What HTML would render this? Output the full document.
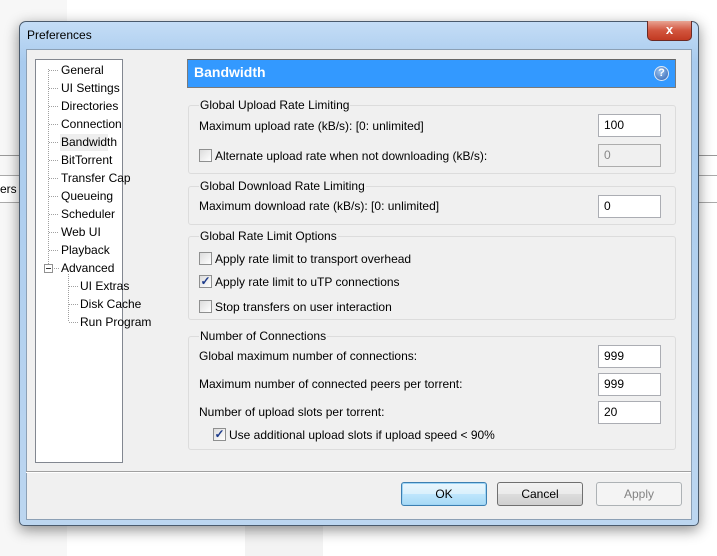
<!DOCTYPE html>
<html><head><style>
*{box-sizing:border-box}
body{margin:0;width:717px;height:556px;background:#fff;font-family:"Liberation Sans",sans-serif;font-size:12px;color:#000;position:relative;overflow:hidden}
.a{position:absolute}
.win{left:19px;top:21px;width:680px;height:505px;border:1px solid #4a5a6c;border-radius:7px 7px 5px 5px;background:linear-gradient(#c4ddf6,#a9cbee 40px,#bcd6f0);box-shadow:0 4px 14px rgba(0,0,0,.45)}
.client{left:6px;top:27px;width:666px;height:471px;background:#f0f0f0;border:1px solid #8ca0b5}
.tree{left:35px;top:59px;width:88px;height:404px;background:#fff;border:1px solid #828790}
.ti{position:absolute;white-space:nowrap}
.grp{position:absolute;left:188px;width:488px;border:1px solid #dcdcdc;border-radius:3px}
.gt{position:absolute;left:10px;top:-8px;background:#f0f0f0;padding:0 1px;white-space:nowrap}
.lbl{position:absolute;left:199px;white-space:nowrap}
.inp{position:absolute;left:598px;width:63px;height:23px;background:#fff;border:1px solid #abadb3;padding:3px 5px}
.cb{position:absolute;width:13px;height:13px;border:1px solid #8e8f8f;background:linear-gradient(135deg,#dcdcdc,#fff)}
.btn{position:absolute;top:482px;width:86px;height:24px;border:1px solid #707070;border-radius:3px;background:linear-gradient(#f2f2f2,#ebebeb 50%,#dddddd 50%,#cfcfcf);text-align:center;line-height:22px}
</style></head><body>
<div class="a" style="left:0;top:0;width:67px;height:556px;background:#f7f7f7"></div>
<div class="a" style="left:0;top:155px;width:30px;height:1px;background:#999"></div>
<div class="a" style="left:0;top:175px;width:30px;height:28px;border-top:1px solid #aaa;border-bottom:1px solid #aaa;background:#fff;font-size:12px;line-height:26px">ers</div>
<div class="a" style="left:245px;top:526px;width:78px;height:30px;background:#f3f3f3"></div>
<div class="a" style="left:698px;top:155px;width:19px;height:1px;background:#999"></div>
<div class="a" style="left:698px;top:175px;width:19px;height:28px;border-top:1px solid #aaa;border-bottom:1px solid #aaa"></div>

<div class="a win">
 <div class="a" style="left:7px;top:6px;font-size:12px">Preferences</div>
 <div class="a" style="left:627px;top:-1px;width:45px;height:20px;border:1px solid #6b2a24;border-top:none;border-radius:0 0 5px 5px;background:linear-gradient(#e8a493,#d2553e 50%,#c23a22);color:#fff;text-align:center;font-weight:bold;font-size:13px;line-height:18px">x</div>
 <div class="a client"></div>
</div>

<div class="a tree">
 <svg class="a" style="left:0;top:0" width="88" height="404">
  <g stroke="#a0a0a0" stroke-dasharray="1 1">
   <line x1="12.5" y1="9" x2="12.5" y2="204"/>
   <line x1="32.5" y1="214" x2="32.5" y2="262"/>
  </g>
  <g stroke="#a0a0a0" stroke-dasharray="1 1">
   <line x1="13" y1="10.5" x2="23" y2="10.5"/><line x1="13" y1="28.5" x2="23" y2="28.5"/><line x1="13" y1="46.5" x2="23" y2="46.5"/><line x1="13" y1="64.5" x2="23" y2="64.5"/><line x1="13" y1="82.5" x2="23" y2="82.5"/><line x1="13" y1="100.5" x2="23" y2="100.5"/><line x1="13" y1="118.5" x2="23" y2="118.5"/><line x1="13" y1="136.5" x2="23" y2="136.5"/><line x1="13" y1="154.5" x2="23" y2="154.5"/><line x1="13" y1="172.5" x2="23" y2="172.5"/><line x1="13" y1="190.5" x2="23" y2="190.5"/><line x1="18" y1="208.5" x2="23" y2="208.5"/>
   <line x1="33" y1="226.5" x2="42" y2="226.5"/><line x1="33" y1="244.5" x2="42" y2="244.5"/><line x1="33" y1="262.5" x2="42" y2="262.5"/>
  </g>
  <rect x="8.5" y="204.5" width="8" height="8" fill="#fff" stroke="#919191"/>
  <line x1="10" y1="208.5" x2="15" y2="208.5" stroke="#333"/>
 </svg>
 <div class="a" style="left:24px;top:74px;width:48px;height:17px;background:#eee"></div>
 <div class="ti" style="left:25px;top:3px">General</div>
 <div class="ti" style="left:25px;top:21px">UI Settings</div>
 <div class="ti" style="left:25px;top:39px">Directories</div>
 <div class="ti" style="left:25px;top:57px">Connection</div>
 <div class="ti" style="left:25px;top:75px">Bandwidth</div>
 <div class="ti" style="left:25px;top:93px">BitTorrent</div>
 <div class="ti" style="left:25px;top:111px">Transfer Cap</div>
 <div class="ti" style="left:25px;top:129px">Queueing</div>
 <div class="ti" style="left:25px;top:147px">Scheduler</div>
 <div class="ti" style="left:25px;top:165px">Web UI</div>
 <div class="ti" style="left:25px;top:183px">Playback</div>
 <div class="ti" style="left:25px;top:201px">Advanced</div>
 <div class="ti" style="left:44px;top:219px">UI Extras</div>
 <div class="ti" style="left:44px;top:237px">Disk Cache</div>
 <div class="ti" style="left:44px;top:255px">Run Program</div>
</div>

<div class="a" style="left:187px;top:59px;width:489px;height:29px;background:#3399ff;border:1px solid #7a7a7a;border-top-color:#666"></div>
<div class="a" style="left:194px;top:64px;color:#fff;font-weight:bold;font-size:14px">Bandwidth</div>
<div class="a" style="left:654px;top:66px;width:15px;height:15px;border-radius:50%;background:radial-gradient(circle at 40% 35%,#9cc4f0,#2c5fb0);border:1px solid #dfe9f5;color:#fff;font-size:11px;font-weight:bold;text-align:center;line-height:13px">?</div>

<div class="grp" style="top:105px;height:69px"><div class="gt">Global Upload Rate Limiting</div></div>
<div class="lbl" style="top:119px">Maximum upload rate (kB/s): [0: unlimited]</div>
<div class="inp" style="top:114px">100</div>
<div class="cb" style="left:199px;top:149px"></div>
<div class="lbl" style="left:215px;top:149px">Alternate upload rate when not downloading (kB/s):</div>
<div class="inp" style="top:144px;background:#f0f0f0;color:#888;border-color:#adadad">0</div>

<div class="grp" style="top:186px;height:39px"><div class="gt">Global Download Rate Limiting</div></div>
<div class="lbl" style="top:199px">Maximum download rate (kB/s): [0: unlimited]</div>
<div class="inp" style="top:195px">0</div>

<div class="grp" style="top:236px;height:84px"><div class="gt">Global Rate Limit Options</div></div>
<div class="cb" style="left:199px;top:252px"></div>
<div class="lbl" style="left:215px;top:252px">Apply rate limit to transport overhead</div>
<div class="cb" style="left:199px;top:275px;color:#1c3a8a;font-size:12px;line-height:10px;text-align:center;font-weight:bold">✓</div>
<div class="lbl" style="left:215px;top:275px">Apply rate limit to uTP connections</div>
<div class="cb" style="left:199px;top:300px"></div>
<div class="lbl" style="left:215px;top:300px">Stop transfers on user interaction</div>

<div class="grp" style="top:336px;height:114px"><div class="gt">Number of Connections</div></div>
<div class="lbl" style="top:349px">Global maximum number of connections:</div>
<div class="inp" style="top:345px">999</div>
<div class="lbl" style="top:377px">Maximum number of connected peers per torrent:</div>
<div class="inp" style="top:373px">999</div>
<div class="lbl" style="top:405px">Number of upload slots per torrent:</div>
<div class="inp" style="top:401px">20</div>
<div class="cb" style="left:213px;top:428px;color:#1c3a8a;font-size:12px;line-height:10px;text-align:center;font-weight:bold">✓</div>
<div class="lbl" style="left:229px;top:428px">Use additional upload slots if upload speed &lt; 90%</div>

<div class="a" style="left:26px;top:471px;width:665px;height:1px;background:#a0a0a0"></div>
<div class="a" style="left:26px;top:472px;width:665px;height:1px;background:#fff"></div>
<div class="btn" style="left:401px;border-color:#3c7fb1;background:linear-gradient(#eaf6fd,#d9f0fc 50%,#bee6fd 50%,#a7d9f5);box-shadow:inset 0 0 0 1px #9fd5f5">OK</div>
<div class="btn" style="left:497px">Cancel</div>
<div class="btn" style="left:596px;border-color:#adb2b5;background:#f4f4f4;color:#838383">Apply</div>
</body></html>
